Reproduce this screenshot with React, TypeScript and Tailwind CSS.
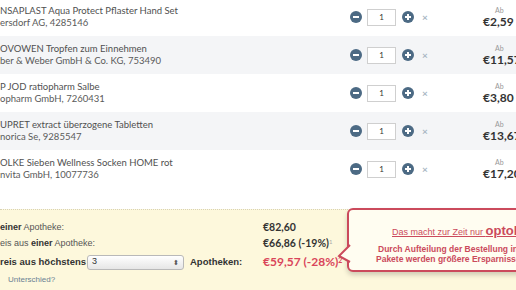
import React from "react";

type Item = { name: string; maker: string; price: string };

const items: Item[] = [
  { name: "NSAPLAST Aqua Protect Pflaster Hand Set", maker: "ersdorf AG, 4285146", price: "€2,59" },
  { name: "OVOWEN Tropfen zum Einnehmen", maker: "ber & Weber GmbH & Co. KG, 753490", price: "€11,57" },
  { name: "P JOD ratiopharm Salbe", maker: "opharm GmbH, 7260431", price: "€3,80" },
  { name: "UPRET extract überzogene Tabletten", maker: "norica Se, 9285547", price: "€13,67" },
  { name: "OLKE Sieben Wellness Socken HOME rot", maker: "nvita GmbH, 10077736", price: "€17,20" },
];

function MinusIcon() {
  return (
    <svg width="12" height="12" viewBox="0 0 12 12" className="shrink-0">
      <circle cx="6" cy="6" r="6" fill="#4c6a84" />
      <rect x="3" y="5" width="6" height="2" fill="#fff" />
    </svg>
  );
}

function PlusIcon() {
  return (
    <svg width="12" height="12" viewBox="0 0 12 12" className="shrink-0">
      <circle cx="6" cy="6" r="6" fill="#4c6a84" />
      <rect x="3" y="5" width="6" height="2" fill="#fff" />
      <rect x="5" y="3" width="2" height="6" fill="#fff" />
    </svg>
  );
}

function Row({ item, odd }: { item: Item; odd: boolean }) {
  return (
    <div className={`flex h-[38px] w-[560px] items-center ${odd ? "bg-[#f4f5f7]" : "bg-white"}`}>
      <div className="w-[350px] shrink-0 whitespace-nowrap text-[9.5px] leading-[12px] text-[#505050]">
        <div>{item.name}</div>
        <div className="text-[#5a5a5a]">{item.maker}</div>
      </div>
      <MinusIcon />
      <div className="ml-[5px] flex h-[17px] w-[29px] shrink-0 items-center justify-center border border-[#cfcfcf] bg-white text-[8px] text-[#333]">
        1
      </div>
      <div className="ml-[6px] shrink-0">
        <PlusIcon />
      </div>
      <div className="ml-[8px] w-[8px] shrink-0 text-[10px] font-bold leading-none text-[#a8b6c3]">×</div>
      <div className="ml-[53px] flex w-[60px] shrink-0 flex-col">
        <span className="pl-[12px] text-[7px] leading-[9px] text-[#999]">Ab</span>
        <span className="whitespace-nowrap text-[12px] font-bold leading-[14px] text-[#333]">{item.price}</span>
      </div>
    </div>
  );
}

export default function App() {
  return (
    <div className="relative h-[290px] w-[516px] overflow-hidden bg-white font-['Lato',sans-serif]">
      <div className="-mt-[2px]">
        {items.map((it, i) => (
          <Row key={i} item={it} odd={i % 2 === 1} />
        ))}
      </div>
      <div className="h-[21px]" />
      <div className="h-[90px] whitespace-nowrap border-t border-dotted border-[#d8d2b4] bg-[#fdf8dc] pt-[10px] font-['Liberation_Sans',sans-serif] text-[9px] text-[#555]">
        <div className="flex h-[16px] items-center">
          <div className="w-[263px] shrink-0">
            <b className="text-[#333]">einer</b> Apotheke:
          </div>
          <div className="font-['Lato',sans-serif] text-[10.5px] font-bold text-[#333]">€82,60</div>
        </div>
        <div className="flex h-[16px] items-center">
          <div className="w-[263px] shrink-0">
            eis aus <b className="text-[#333]">einer</b> Apotheke:
          </div>
          <div className="font-['Lato',sans-serif] text-[10.5px] font-bold text-[#333]">
            €66,86 (-19%)<sup className="text-[6px] font-normal text-[#aaa]">1</sup>
          </div>
        </div>
        <div className="flex h-[20px] items-center">
          <div className="flex w-[263px] shrink-0 items-center text-[9.5px] font-bold text-[#333]">
            <span className="w-[87px] shrink-0">reis aus höchstens</span>
            <div className="flex h-[15px] w-[97px] shrink-0 items-center justify-between rounded-[3px] border border-[#b9b9b9] bg-gradient-to-b from-white to-[#e6e6e6] pl-[4px] pr-[4px] text-[9px] font-normal">
              <span>3</span>
              <span className="text-[7px] leading-none text-[#555]">⬍</span>
            </div>
            <span className="ml-[6px]">Apotheken:</span>
          </div>
          <div className="font-['Lato',sans-serif] text-[12px] font-bold text-[#d9455a]">
            €59,57 (-28%)<sup className="text-[7px]">2</sup>
          </div>
        </div>
        <div className="flex h-[16px] items-center pl-[8px] text-[8px] text-[#6a7f93]">Unterschied?</div>
      </div>

      <div className="absolute left-[347px] top-[208px] h-[64px] w-[220px] rounded-[6px] border-2 border-[#cb4a5c] bg-[#fffdf1] font-['Liberation_Sans',sans-serif] shadow-[0_3px_5px_rgba(0,0,0,0.18)]">
        <svg className="absolute left-[-12px] top-[33px]" width="14" height="22" viewBox="0 0 14 22">
          <polygon points="14,1 2,13 14,20" fill="#fffdf1" />
          <polyline points="13,2 2,13 13,19" fill="none" stroke="#cb4a5c" strokeWidth="2" />
        </svg>
        <div className="absolute left-[43px] top-[11px] whitespace-nowrap text-[9px] text-[#cb4a5c] underline">
          Das macht zur Zeit nur <span className="text-[13px] font-bold">optobest</span>
        </div>
        <div className="absolute left-[27px] top-[34px] whitespace-nowrap text-[8.5px] font-bold leading-[10px] text-[#cb4a5c]">
          <div className="pl-[2px]">Durch Aufteilung der Bestellung in mehrere</div>
          <div>Pakete werden größere Ersparnisse erzielt</div>
        </div>
      </div>
    </div>
  );
}
